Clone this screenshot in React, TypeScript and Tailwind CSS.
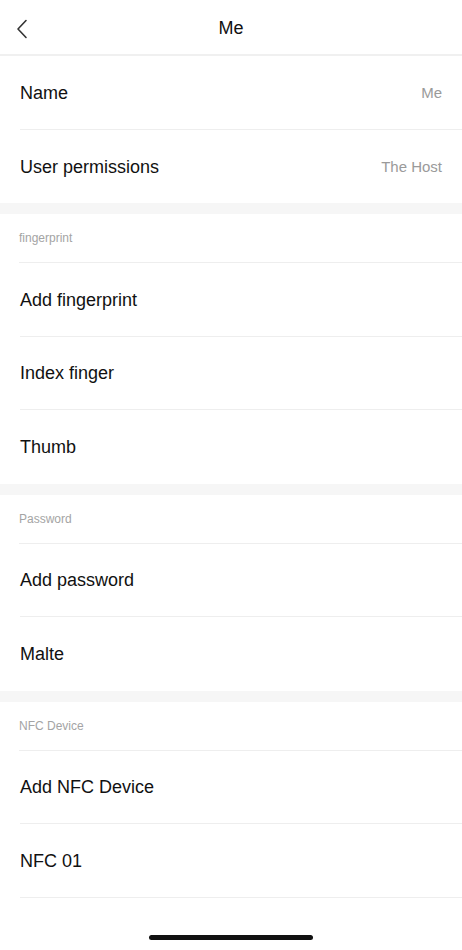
import React from "react";

const font = { fontFamily: '"Liberation Sans", Arial, sans-serif' };

function Row({ label, value, last }: { label: string; value?: string; last?: boolean }) {
  return (
    <div className="h-[73.5px] pl-5 bg-white">
      <div className={`h-full flex items-center pr-5 pt-[2px] ${last ? "" : "border-b border-[#eeeeee]"}`}>
        <span className="text-[18px] text-[#111111] flex-1">{label}</span>
        {value && <span className="text-[15px] text-[#9a9a9a]">{value}</span>}
      </div>
    </div>
  );
}

function SectionHeader({ title }: { title: string }) {
  return (
    <div className="h-[49px] pl-[19px] bg-white">
      <div className="h-full flex items-center border-b border-[#eeeeee]">
        <span className="text-[12px] text-[#a4a4a4]">{title}</span>
      </div>
    </div>
  );
}

function Gap() {
  return <div className="h-[11px] bg-[#f6f6f6]" />;
}

export default function App() {
  return (
    <div className="w-[462px] h-[950px] bg-white flex flex-col relative overflow-hidden" style={font}>
      <div className="h-[56px] flex items-center justify-center relative border-b-2 border-[#f0f0f0] shrink-0">
        <svg className="absolute left-[15px] top-[19px]" width="14" height="20" viewBox="0 0 14 20" fill="none">
          <path d="M11 1.5 L3 10 L11 18.5" stroke="#333" strokeWidth="1.6" strokeLinecap="round" strokeLinejoin="round" />
        </svg>
        <span className="text-[18px] text-[#111111] pt-[3px]">Me</span>
      </div>
      <Row label="Name" value="Me" />
      <Row label="User permissions" value="The Host" last />
      <Gap />
      <SectionHeader title="fingerprint" />
      <Row label="Add fingerprint" />
      <Row label="Index finger" />
      <Row label="Thumb" last />
      <Gap />
      <SectionHeader title="Password" />
      <Row label="Add password" />
      <Row label="Malte" last />
      <Gap />
      <SectionHeader title="NFC Device" />
      <Row label="Add NFC Device" />
      <Row label="NFC 01" />
      <div className="flex-1" />
      <div className="absolute left-[149px] top-[935px] w-[164px] h-[5px] rounded-full bg-[#111111]" />
    </div>
  );
}
